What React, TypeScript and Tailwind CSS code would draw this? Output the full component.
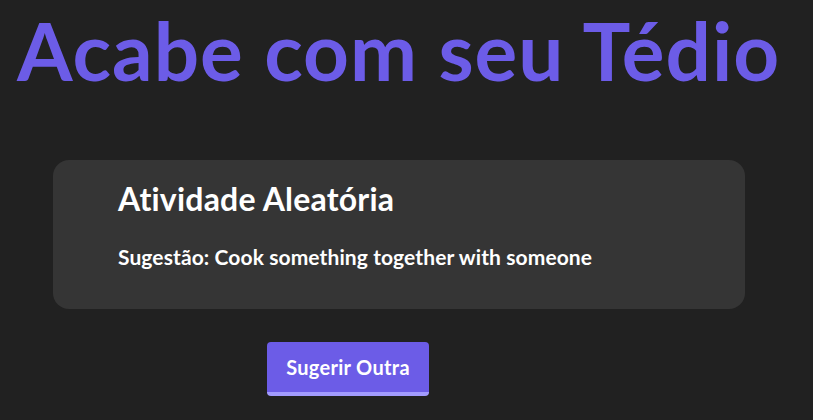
export default function App() {
  return (
    <div
      className="min-h-screen w-full bg-[#212121] text-white"
      style={{ fontFamily: "Lato, 'Open Sans', sans-serif" }}
    >
      <h1 className="pl-[17px] pt-[8px] text-[80px] leading-[84px] font-bold tracking-[1px] text-[#6c5ce7]">
        Acabe com seu Tédio
      </h1>

      <div className="ml-[53px] mt-[68px] flex h-[149px] w-[692px] flex-col rounded-2xl bg-[#353535] pl-[65px] pt-[19px]">
        <h2 className="text-[32px] leading-[40px] font-bold tracking-[0.2px]">Atividade Aleatória</h2>
        <p className="mt-[25px] text-[21px] leading-[26px] font-bold tracking-[0.1px]">
          Sugestão: Cook something together with someone
        </p>
      </div>

      <div className="ml-[267px] mt-[33px]">
        <button className="h-[54px] w-[162px] rounded-[4px] border-b-4 border-[#a29bfe] bg-[#6c5ce7] text-[20px] font-bold tracking-[0.3px] text-white">
          Sugerir Outra
        </button>
      </div>
    </div>
  );
}
